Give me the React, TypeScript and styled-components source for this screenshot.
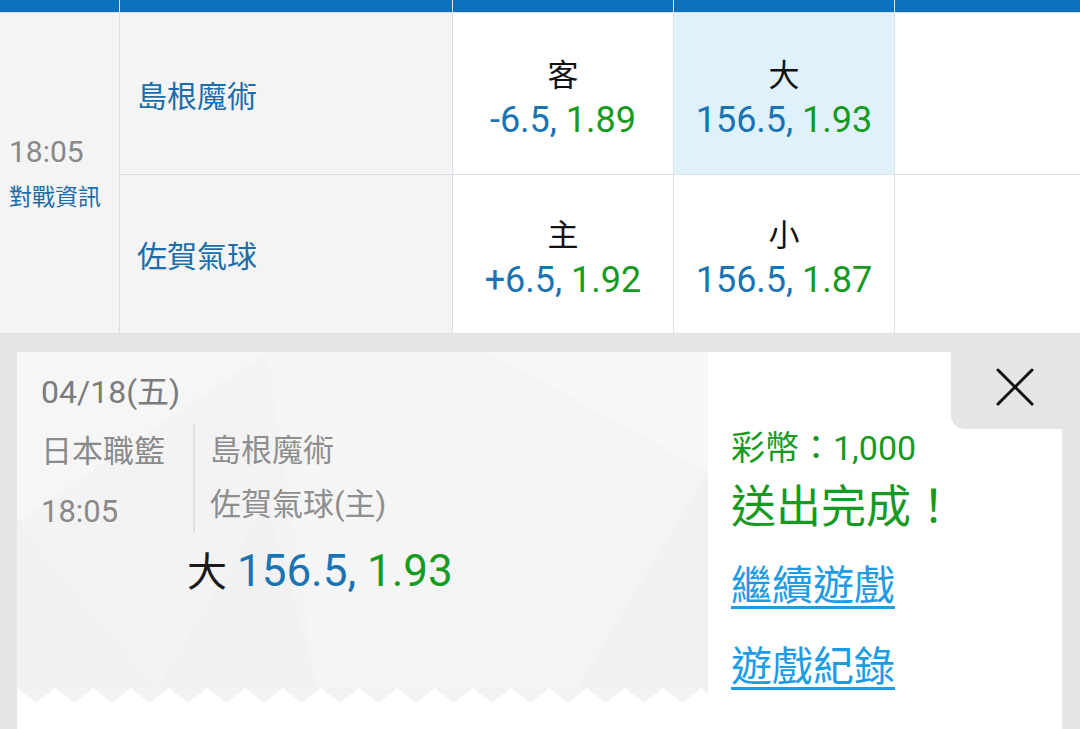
import styled, { createGlobalStyle } from "styled-components";

const FONT = `Roboto, "Noto Sans CJK TC", "Noto Sans", sans-serif`;

const GlobalStyle = createGlobalStyle`
  html, body { margin: 0; padding: 0; }
  body {
    width: 1080px;
    height: 729px;
    overflow: hidden;
    background: #e6e6e6;
    font-family: ${FONT};
  }
`;

const rows = [
  { team: "島根魔術", side: "客", spread: "-6.5", spreadOdds: "1.89", ou: "大", total: "156.5", totalOdds: "1.93", picked: true },
  { team: "佐賀氣球", side: "主", spread: "+6.5", spreadOdds: "1.92", ou: "小", total: "156.5", totalOdds: "1.87", picked: false },
];

// faint facets behind the ticket
const facets = `<svg xmlns='http://www.w3.org/2000/svg' width='691' height='336'>
<rect width='691' height='336' fill='#f3f3f3'/>
<polygon points='0,0 250,0 0,170' fill='#f6f6f6'/>
<polygon points='250,0 470,0 360,336 300,336' fill='#f5f5f5'/>
<polygon points='470,0 691,0 691,120' fill='#f7f7f7'/>
<polygon points='0,170 140,336 0,336' fill='#f1f1f1'/>
<polygon points='140,336 300,336 250,150' fill='#f1f1f1'/>
<polygon points='470,0 691,120 560,336 360,336' fill='#f4f4f4'/>
<polygon points='560,336 691,120 691,336' fill='#f1f1f1'/>
</svg>`;

const zigzag = `<svg xmlns='http://www.w3.org/2000/svg' width='38' height='15'><polygon points='0,0 38,0 19,15' fill='#f2f2f2'/></svg>`;

const svgUrl = (s: string) => `url("data:image/svg+xml;utf8,${encodeURIComponent(s)}")`;

export default function App() {
  return (
    <>
      <GlobalStyle />
      <Table>
        <HeadCell />
        <HeadCell />
        <HeadCell />
        <HeadCell />
        <HeadCell />
        <TimeCell>
          <KickOff>18:05</KickOff>
          <InfoLink>對戰資訊</InfoLink>
        </TimeCell>
        {rows.map((r) => (
          <>
            <TeamCell key={r.team}>{r.team}</TeamCell>
            <OddsCell>
              <Pick>{r.side}</Pick>
              <Line>
                <Num>{r.spread}, </Num>
                <Price>{r.spreadOdds}</Price>
              </Line>
            </OddsCell>
            <OddsCell $picked={r.picked}>
              <Pick>{r.ou}</Pick>
              <Line>
                <Num>{r.total}, </Num>
                <Price>{r.totalOdds}</Price>
              </Line>
            </OddsCell>
            <EmptyCell />
          </>
        ))}
      </Table>

      <Overlay>
        <Panel>
          <Ticket>
            <TicketBody>
              <DateText>04/18(五)</DateText>
              <MatchRow>
                <LeagueCol>
                  <GrayLine>日本職籃</GrayLine>
                  <GrayLine>18:05</GrayLine>
                </LeagueCol>
                <TeamsCol>
                  <TeamLine>島根魔術</TeamLine>
                  <TeamLine>佐賀氣球(主)</TeamLine>
                </TeamsCol>
              </MatchRow>
              <BetLine>
                <BetPick>大 </BetPick>
                <Num>156.5, </Num>
                <Price>1.93</Price>
              </BetLine>
            </TicketBody>
            <Zigzag />
          </Ticket>
          <Result>
            <CloseTab aria-label="close">
              <svg width="38" height="38" viewBox="0 0 38 38">
                <path d="M2 2 L36 36 M36 2 L2 36" stroke="#111" strokeWidth="3" strokeLinecap="round" />
              </svg>
            </CloseTab>
            <ResultBody>
              <Coins>彩幣：1,000</Coins>
              <Done>送出完成！</Done>
              <ActionLink href="#">繼續遊戲</ActionLink>
              <ActionLink href="#">遊戲紀錄</ActionLink>
            </ResultBody>
          </Result>
        </Panel>
      </Overlay>
    </>
  );
}

const Table = styled.div`
  display: grid;
  grid-template-columns: 119px 332px 220px 220px 1fr;
  grid-template-rows: 12px 161px 158px;
  gap: 1px;
  background: #d8e1e9;
  border-bottom: 1px solid #dcdfe2;
`;
const HeadCell = styled.div`
  background: #0a72bc;
`;
const TimeCell = styled.div`
  grid-column: 1;
  grid-row: 2 / span 2;
  background: #f4f4f4;
  display: flex;
  flex-direction: column;
  justify-content: center;
  padding-left: 9px;
`;
const KickOff = styled.div`
  font-size: 30px;
  line-height: 36px;
  color: #888888;
`;
const InfoLink = styled.div`
  margin-top: 14px;
  font-size: 23px;
  line-height: 28px;
  color: #1b6ea7;
`;
const TeamCell = styled.div`
  background: #f4f4f4;
  display: flex;
  align-items: center;
  padding-left: 17px;
  font-size: 30px;
  color: #1b6ea7;
`;
const OddsCell = styled.div<{ $picked?: boolean }>`
  background: ${(p) => (p.$picked ? "#dff2fc" : "#ffffff")};
  display: flex;
  flex-direction: column;
  align-items: center;
  justify-content: center;
  padding-top: 10px;
  gap: 6px;
`;
const EmptyCell = styled.div`
  background: #ffffff;
`;
const Pick = styled.div`
  font-size: 31px;
  line-height: 36px;
  color: #111;
`;
const Line = styled.div`
  font-size: 36px;
  line-height: 40px;
  white-space: pre;
`;
const Num = styled.span`
  color: #1a74b3;
  white-space: pre;
`;
const Price = styled.span`
  color: #179a21;
`;

const Overlay = styled.div`
  padding: 18px 18px 0 17px;
`;
const Panel = styled.div`
  display: flex;
  height: 377px;
  background: #ffffff;
`;
const Ticket = styled.div`
  width: 691px;
  display: flex;
  flex-direction: column;
  align-self: flex-start;
`;
const TicketBody = styled.div`
  height: 336px;
  box-sizing: border-box;
  padding: 22px 0 0 24px;
  background-image: ${svgUrl(facets)};
  background-size: 691px 336px;
`;
const Zigzag = styled.div`
  height: 15px;
  background-image: ${svgUrl(zigzag)};
  background-repeat: repeat-x;
  background-size: 38px 15px;
`;
const DateText = styled.div`
  font-size: 32px;
  line-height: 36px;
  color: #7b7b7b;
`;
const MatchRow = styled.div`
  display: flex;
  align-items: flex-start;
  margin-top: 14px;
`;
const LeagueCol = styled.div`
  width: 152px;
  display: flex;
  flex-direction: column;
  gap: 4px;
`;
const GrayLine = styled.div`
  font-size: 31px;
  line-height: 56px;
  color: #8a8a8a;
`;
const TeamsCol = styled.div`
  border-left: 2px solid #e0e0e0;
  padding-left: 15px;
`;
const TeamLine = styled.div`
  font-size: 31px;
  line-height: 54px;
  color: #8e8e8e;
`;
const BetLine = styled.div`
  margin: 6px 0 0 146px;
  font-size: 44px;
  line-height: 50px;
  white-space: pre;
`;
const BetPick = styled.span`
  color: #1a1a1a;
  font-size: 40px;
`;

const Result = styled.div`
  flex: 1;
  display: flex;
  flex-direction: column;
`;
const CloseTab = styled.button`
  align-self: flex-end;
  width: 111px;
  height: 77px;
  border: 0;
  padding: 0 0 8px 16px;
  background: #e5e5e5;
  border-bottom-left-radius: 14px;
  display: flex;
  align-items: center;
  justify-content: center;
  cursor: pointer;
`;
const ResultBody = styled.div`
  display: flex;
  flex-direction: column;
  align-items: flex-start;
  padding-left: 23px;
`;
const Coins = styled.div`
  font-size: 34px;
  line-height: 38px;
  color: #179a21;
`;
const Done = styled.div`
  margin-top: 15px;
  font-size: 45px;
  line-height: 52px;
  color: #179a21;
`;
const ActionLink = styled.a`
  margin-top: 27px;
  font-size: 41px;
  line-height: 50px;
  color: #1d9ce6;
  text-decoration: underline;
  text-decoration-thickness: 3px;
  text-underline-offset: 6px;
  & + & {
    margin-top: 31px;
  }
`;
